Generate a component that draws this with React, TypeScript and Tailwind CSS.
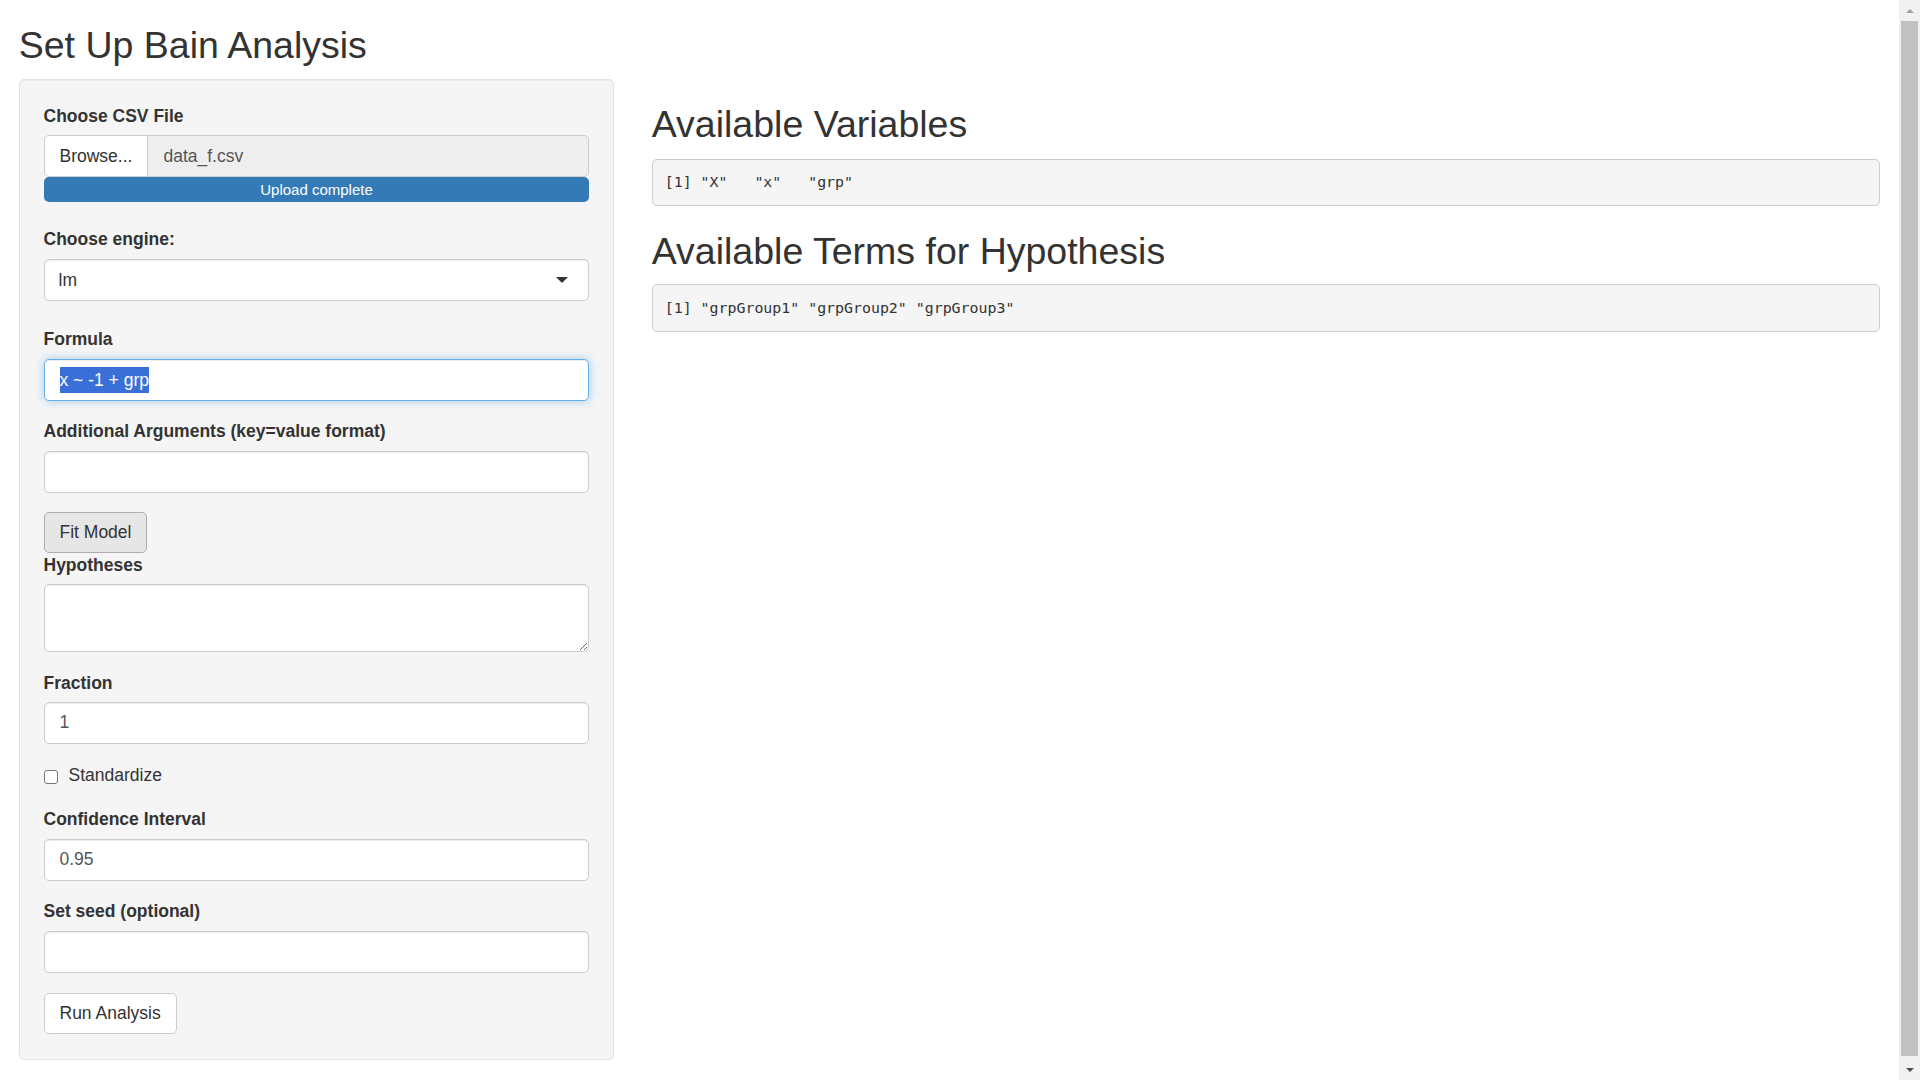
import React from "react";

const FONT = "font-['Liberation_Sans',Arial,Helvetica,sans-serif]";

function FieldLabel({ children, className = "" }: { children: React.ReactNode; className?: string }) {
  return (
    <label className={`block h-[25px] text-[17.5px] font-bold leading-[25px] text-[#333] ${className}`}>
      {children}
    </label>
  );
}

function TextField({ value = "", className = "" }: { value?: string; className?: string }) {
  return (
    <input
      type="text"
      defaultValue={value}
      className={`block h-[42px] w-full rounded-[5px] border border-[#ccc] bg-white px-[15px] text-[17.5px] text-[#555] shadow-[inset_0_1px_1px_rgba(0,0,0,0.075)] outline-none ${className}`}
    />
  );
}

function Button({ children, active = false, className = "" }: { children: React.ReactNode; active?: boolean; className?: string }) {
  return (
    <button
      type="button"
      className={`flex h-[41px] items-center self-start rounded-[5px] border px-[15px] text-[17.5px] leading-[25px] text-[#333] ${
        active ? "border-[#adadad] bg-[#e6e6e6]" : "border-[#ccc] bg-white"
      } ${className}`}
    >
      {children}
    </button>
  );
}

function Sidebar() {
  return (
    <div className="flex flex-col rounded-[5px] border border-[#e3e3e3] bg-[#f5f5f5] px-[23.75px] pb-[25px] pt-[23.75px] shadow-[inset_0_1px_1px_rgba(0,0,0,0.05)]">
      {/* file upload */}
      <FieldLabel className="mb-[6.25px]">Choose CSV File</FieldLabel>
      <div className="flex h-[42.5px]">
        <div className="flex items-center rounded-l-[5px] border border-[#ccc] bg-white px-[15px] text-[17.5px] text-[#333]">
          Browse...
        </div>
        <div className="flex flex-1 items-center rounded-r-[5px] border border-l-0 border-[#ccc] bg-[#eee] px-[15px] text-[17.5px] text-[#555]">
          data_f.csv
        </div>
      </div>
      <div className="mb-[24.75px] flex h-[25px] items-center justify-center rounded-[5px] bg-[#337ab7] text-[15px] text-white">
        Upload complete
      </div>

      {/* engine select */}
      <FieldLabel className="mb-[7.3px]">Choose engine:</FieldLabel>
      <div className="flex h-[41.5px] items-center justify-between rounded-[5px] border border-[#ccc] bg-white pl-[14px] pr-[20.5px] text-[17.5px] text-[#333] shadow-[inset_0_1px_1px_rgba(0,0,0,0.075)]">
        <span>lm</span>
        <span className="h-0 w-0 border-x-[6px] border-t-[6.5px] border-x-transparent border-t-[#333]" />
      </div>

      {/* formula */}
      <FieldLabel className="mb-[6.25px] mt-[26.7px]">Formula</FieldLabel>
      <div className="flex h-[42px] items-center rounded-[5px] border border-[#66afe9] bg-white px-[15px] text-[17.5px] shadow-[inset_0_1px_1px_rgba(0,0,0,0.075),0_0_10px_rgba(102,175,233,0.6)]">
        <span className="bg-[#3a6fd8] text-white">x ~ -1 + grp</span>
      </div>

      <FieldLabel className="mb-[6.25px] mt-[18.75px]">Additional Arguments (key=value format)</FieldLabel>
      <TextField />

      <Button active className="mt-[19.5px]">
        Fit Model
      </Button>

      <FieldLabel className="mb-[6.25px]">Hypotheses</FieldLabel>
      <textarea
        rows={2}
        className="block h-[67.5px] w-full resize-y rounded-[5px] border border-[#ccc] bg-white px-[15px] py-[7.5px] text-[17.5px] text-[#555] shadow-[inset_0_1px_1px_rgba(0,0,0,0.075)] outline-none"
      />

      <FieldLabel className="mb-[6.25px] mt-[18.75px]">Fraction</FieldLabel>
      <TextField value="1" />

      {/* standardize checkbox */}
      <div className="mt-[19px] flex h-[25px] items-start">
        <span className="mt-[7px] h-[14px] w-[14px] rounded-[3px] border border-[#767676] bg-white" />
        <span className="ml-[11px] text-[17.5px] leading-[25px] text-[#333]">Standardize</span>
      </div>

      <FieldLabel className="mb-[6.25px] mt-[19.3px]">Confidence Interval</FieldLabel>
      <TextField value="0.95" />

      <FieldLabel className="mb-[6.25px] mt-[18.75px]">Set seed (optional)</FieldLabel>
      <TextField />

      <Button className="mt-[20px]">Run Analysis</Button>
    </div>
  );
}

function OutputBlock({ text }: { text: string }) {
  return (
    <pre className="flex h-[47.5px] items-center rounded-[5px] border border-[#ccc] bg-[#f5f5f5] px-[12px] font-['DejaVu_Sans_Mono',Consolas,monospace] text-[14.9px] whitespace-pre text-[#333]">
      {text}
    </pre>
  );
}

function MainPanel() {
  return (
    <div className="flex flex-col">
      <h2 className="mt-[25px] h-[41.25px] text-[37.5px] leading-[41.25px] font-normal text-[#333]">Available Variables</h2>
      <div className="mt-[13.5px]">
        <OutputBlock text={'[1] "X"   "x"   "grp"'} />
      </div>
      <h2 className="mt-[24.7px] h-[41.25px] text-[37.5px] leading-[41.25px] font-normal text-[#333]">
        Available Terms for Hypothesis
      </h2>
      <div className="mt-[12.5px]">
        <OutputBlock text={'[1] "grpGroup1" "grpGroup2" "grpGroup3"'} />
      </div>
    </div>
  );
}

function ScrollTrack() {
  return (
    <div className="flex h-full w-[21px] shrink-0 flex-col bg-[#f1f1f1]">
      <div className="flex h-[21px] items-center justify-center">
        <span className="h-0 w-0 border-x-[4.5px] border-b-[4.5px] border-x-transparent border-b-[#a3a3a3]" />
      </div>
      <div className="flex flex-1 flex-col px-[2px]">
        <div className="h-[1035px] bg-[#c1c1c1]" />
      </div>
      <div className="flex h-[21px] items-center justify-center">
        <span className="h-0 w-0 border-x-[4.5px] border-t-[4.5px] border-x-transparent border-t-[#505050]" />
      </div>
    </div>
  );
}

export default function App() {
  return (
    <div className={`flex h-screen w-full overflow-hidden bg-white text-[#333] ${FONT}`}>
      <div className="min-w-0 flex-1 px-[18.75px]">
        <h2 className="mb-[12.5px] mt-[25px] h-[41.25px] text-[37.5px] leading-[41.25px] font-normal text-[#333]">
          Set Up Bain Analysis
        </h2>
        <div className="mx-[-18.75px] flex">
          <div className="w-1/3 px-[18.75px]">
            <Sidebar />
          </div>
          <div className="w-2/3 px-[18.75px]">
            <MainPanel />
          </div>
        </div>
      </div>
      <ScrollTrack />
    </div>
  );
}
